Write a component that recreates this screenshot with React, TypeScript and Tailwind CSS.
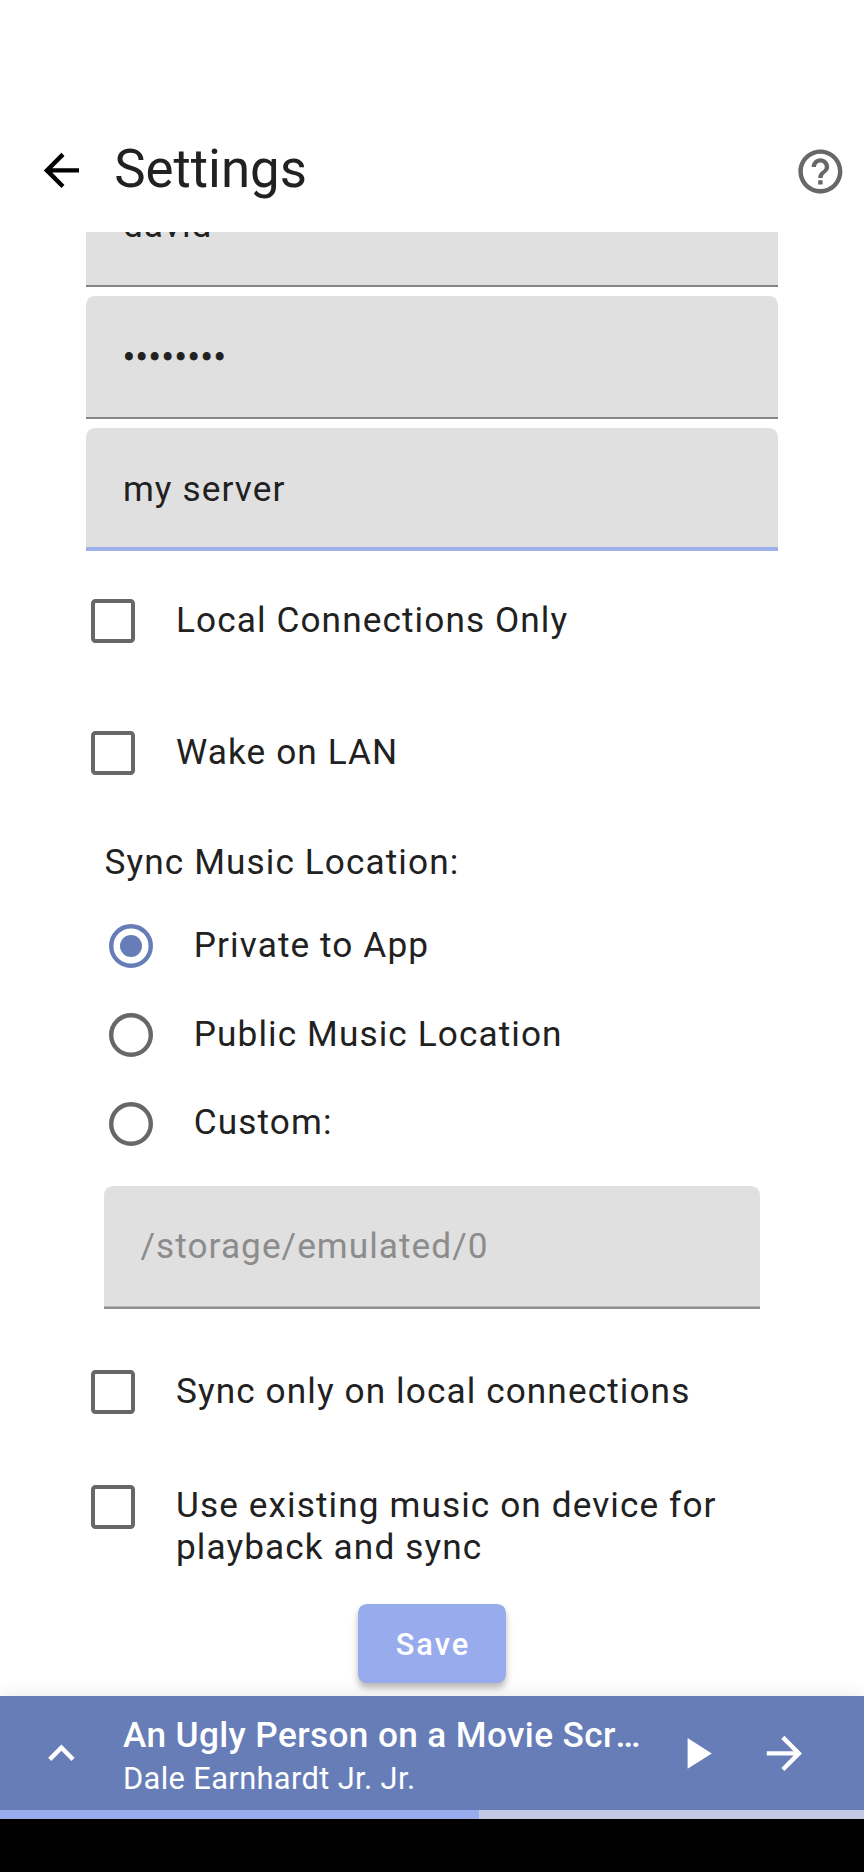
import type { ReactNode } from "react";

function Icon({ d, className }: { d: string; className?: string }) {
  return (
    <svg viewBox="0 0 24 24" fill="currentColor" className={`size-[52.8px] shrink-0 ${className ?? ""}`}>
      <path d={d} />
    </svg>
  );
}

const ARROW_BACK = "M20 11H7.83l5.59-5.59L12 4l-8 8 8 8 1.41-1.41L7.83 13H20v-2z";
const ARROW_FORWARD = "M12 4l-1.41 1.41L16.17 11H4v2h12.17l-5.58 5.59L12 20l8-8z";
const EXPAND_LESS = "M12 8l-6 6 1.41 1.41L12 10.83l4.59 4.58L18 14z";
const PLAY = "M8 5v14l11-7z";
const HELP =
  "M11 18h2v-2h-2v2zm1-16C6.48 2 2 6.48 2 12s4.48 10 10 10 10-4.48 10-10S17.52 2 12 2zm0 18c-4.41 0-8-3.59-8-8s3.59-8 8-8 8 3.59 8 8-3.59 8-8 8zm0-14c-2.21 0-4 1.79-4 4h2c0-1.1.9-2 2-2s2 .9 2 2c0 2-3 1.75-3 5h2c0-2.25 3-2.5 3-5 0-2.21-1.79-4-4-4z";

function Field({ children, line = "normal" }: { children: ReactNode; line?: "normal" | "focused" | "disabled" }) {
  const border =
    line === "focused"
      ? "h-[4px] bg-[#9fb0ea]"
      : line === "disabled"
        ? "h-[3px] border-t border-[#b4b4b4] bg-[#909090]"
        : "h-[2px] bg-[#858585]";
  return (
    <div className="flex h-[123px] shrink-0 flex-col overflow-hidden rounded-t-[8.8px] bg-[#e0e0e0]">
      <div
        className={`flex h-[120px] grow items-center px-[36.5px] ${
          line === "disabled" ? "tracking-[1.05px] text-[#8c8c8c]" : "text-[#212121]"
        } ${line === "focused" ? "pt-[3px]" : ""}`}
      >
        <span className="leading-[42px]">{children}</span>
      </div>
      <div className={`shrink-0 ${border}`} />
    </div>
  );
}

function Checkbox() {
  return <span className="size-[44px] shrink-0 rounded-[4.4px] border-4 border-[#676767]" />;
}

function CheckRow({
  children,
  className,
  labelClass = "pb-[3px]",
}: {
  children: ReactNode;
  className: string;
  labelClass?: string;
}) {
  return (
    <label className={`flex shrink-0 items-center gap-[41px] pl-[4.6px] ${className}`}>
      <Checkbox />
      <span className={`leading-[42px] ${labelClass}`}>{children}</span>
    </label>
  );
}

function RadioRow({ children, selected }: { children: ReactNode; selected?: boolean }) {
  return (
    <label className="flex h-[88.7px] shrink-0 items-center gap-[41px] pl-[4.8px]">
      <svg
        viewBox="0 0 20 20"
        className={`size-[44px] shrink-0 ${selected ? "text-[#677db8]" : "text-[#676767]"}`}
      >
        <circle cx="10" cy="10" r="9" fill="none" stroke="currentColor" strokeWidth="2" />
        {selected && <circle cx="10" cy="10" r="5" fill="currentColor" />}
      </svg>
      <span className="pb-[3px] leading-[42px]">{children}</span>
    </label>
  );
}

export default function App() {
  return (
    <div className="flex h-[1872px] w-[864px] flex-col overflow-hidden bg-white font-['Roboto',sans-serif] text-[35.2px] tracking-[1.1px] text-[#212121]">
      <header className="flex h-[232px] shrink-0 items-start pt-[144px] pr-[17.6px] pl-[35.4px]">
        <Icon d={ARROW_BACK} className="text-black" />
        <h1 className="-mt-[6px] ml-[26px] grow text-[52.8px] leading-[62px] font-normal tracking-normal">Settings</h1>
        <Icon d={HELP} className="mt-[0.6px] text-[#676767]" />
      </header>

      <main className="flex h-[1464px] shrink-0 flex-col overflow-hidden px-[86.4px]">
        <div className="-mt-[68px] flex flex-col gap-[9px]">
          <Field>david</Field>
          <Field>
            <span className="[-webkit-text-stroke:0.8px_#212121]">••••••••</span>
          </Field>
          <Field line="focused">my server</Field>
        </div>

        <CheckRow className="mt-[4px] h-[132px]">Local Connections Only</CheckRow>
        <CheckRow className="h-[132px]">Wake on LAN</CheckRow>

        <section className="flex shrink-0 flex-col px-[17.6px]">
          <h2 className="flex h-[83px] items-center pt-[3px] pl-[0.6px] font-normal">Sync Music Location:</h2>
          <RadioRow selected>Private to App</RadioRow>
          <RadioRow>Public Music Location</RadioRow>
          <RadioRow>Custom:</RadioRow>
          <div className="mt-[17.6px]">
            <Field line="disabled">/storage/emulated/0</Field>
          </div>
        </section>

        <CheckRow className="mt-[17px] h-[132px]" labelClass="pb-px">
          Sync only on local connections
        </CheckRow>
        <label className="mt-[27px] flex h-[82px] shrink-0 items-start gap-[41px] pl-[4.6px]">
          <Checkbox />
          <span className="mt-[0.6px] leading-[41.4px]">Use existing music on device for playback and sync</span>
        </label>

        <button className="mt-[37px] flex h-[79px] w-[148px] shrink-0 items-center justify-center self-center rounded-[8.8px] bg-[#98abec] pt-[4px] pl-[2px] text-[30.8px] font-medium tracking-[2px] text-white shadow-[0_5px_7px_rgba(0,0,0,0.28)]">
          Save
        </button>
      </main>

      <footer className="relative flex h-[114px] shrink-0 items-center bg-[#677db8] pl-[35.2px] text-white shadow-[0_0_18px_rgba(0,0,0,0.1)]">
        <Icon d={EXPAND_LESS} />
        <div className="ml-[35px] flex w-[520px] shrink-0 flex-col pt-[6px]">
          <p className="truncate text-[35.2px] leading-[44px] font-medium tracking-[0.38px]">
            An Ugly Person on a Movie Screen
          </p>
          <p className="text-[30.8px] leading-[43px] tracking-[0.38px]">Dale Earnhardt Jr. Jr.</p>
        </div>
        <Icon d={PLAY} className="ml-[27px]" />
        <Icon d={ARROW_FORWARD} className="ml-[35px]" />
      </footer>
      <div className="relative flex h-[9px] shrink-0 bg-[#c2c9e3]">
        <div className="w-[479px] bg-[#98abec]" />
      </div>
      <div className="relative grow bg-black" />
    </div>
  );
}
